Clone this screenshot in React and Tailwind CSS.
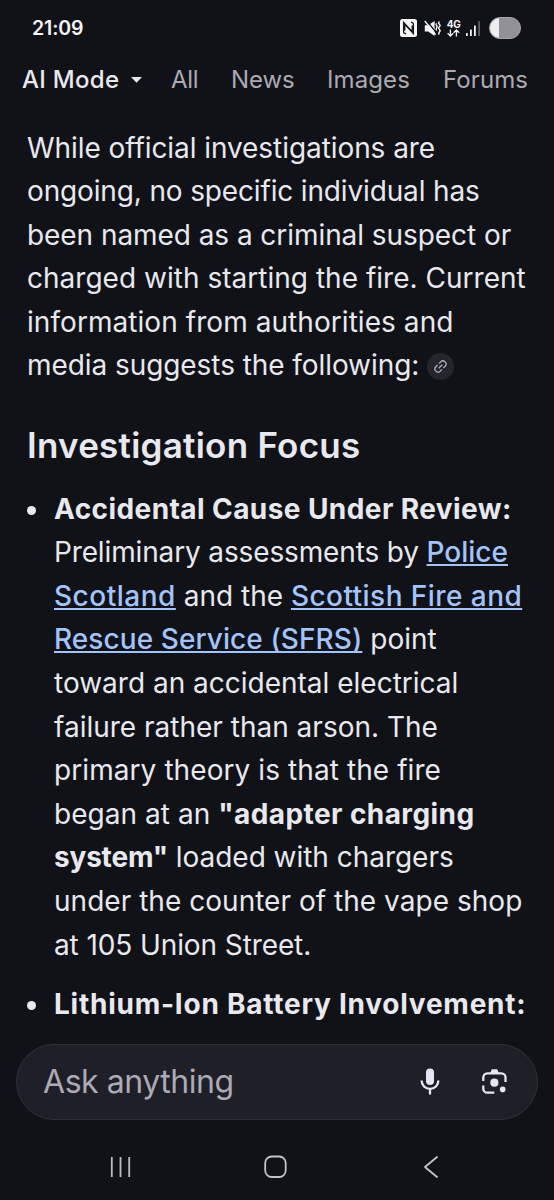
import clsx from "clsx";

const tabs = [
  { label: "All", className: "ml-[29px] w-[28px] tracking-[-0.3px]" },
  { label: "News", className: "ml-[32px] w-[64px] tracking-[-0.1px]" },
  { label: "Images", className: "ml-[32px] w-[84px] tracking-[0.1px]" },
  { label: "Forums", className: "ml-[32px] w-[86px] tracking-[0.1px]" },
];

const Line = ({ className, children }) => (
  <span className={clsx("block whitespace-pre", className)}>{children}</span>
);

const SourceLink = ({ className, children }) => (
  <a
    href="#"
    className={clsx(
      "font-medium text-[#a3c3fb] underline decoration-[1.5px] underline-offset-[2px] [text-decoration-skip-ink:none]",
      className
    )}
  >
    {children}
  </a>
);

const StatusBar = () => (
  <div className="flex h-[56px] items-center justify-between pl-[32px] pr-[33px] text-[#f5f5f7]">
    <span className="mt-[2px] text-[19.5px] font-semibold leading-none tracking-[-0.1px]">21:09</span>
    <div className="flex items-center">
      {/* NFC */}
      <svg width="17" height="18" viewBox="0 0 17 18" className="mr-[7px]">
        <rect width="17" height="18" rx="2.5" fill="#f5f5f7" />
        <path
          d="M6 14.8 4.4 14.2Q3.6 13.9 3.6 13V3.4L12.2 12.6V6.6M11 3.2l1.6.6q.8.3.8 1.2v9.6L4.8 5.4v6"
          fill="none"
          stroke="#17181d"
          strokeWidth="1.3"
        />
      </svg>
      {/* muted, vibrating */}
      <svg width="17" height="17" viewBox="0 0 17 17" className="mr-[5px]" fill="none">
        <path d="M.8 5.3h3.4L10.6 1v15l-6.4-4.5H.8z" fill="#f5f5f7" />
        <path d="M2.2 0 12 12.4" stroke="#111217" strokeWidth="1.4" />
        <path d="M.8 1 11.6 14.6" stroke="#f5f5f7" strokeWidth="1.4" />
        <path
          d="M12.6 3.2q-1.2 1.2 0 2.4t0 2.4 0 2.4M15.4 1.6q-1.4 1.3 0 2.6t0 2.6 0 2.6 0 2.6 0 2.6"
          stroke="#f5f5f7"
          strokeWidth="1.4"
        />
      </svg>
      <div className="mr-[5px] flex w-[15px] flex-col items-center">
        <span className="text-[10px] font-bold leading-[9px] tracking-[-0.4px]">4G</span>
        <svg width="13" height="8" viewBox="0 0 13 8" fill="none" stroke="#f5f5f7" strokeWidth="1.3">
          <path d="M3.4 0.4v6.4M.6 4.2l2.8 2.8 2.8-2.8M9.4 7.6V1.2M6.6 3.8 9.4 1l2.8 2.8" />
        </svg>
      </div>
      <svg width="15" height="15" viewBox="0 0 15 15" className="mr-[8px]" fill="#f5f5f7">
        <rect x="0" y="12" width="1.7" height="3" rx=".6" />
        <rect x="4" y="8.5" width="1.8" height="6.5" rx=".6" />
        <rect x="8" y="4.5" width="1.8" height="10.5" rx=".6" />
        <rect x="12.2" y="0" width="1.8" height="15" rx=".6" fill="#5c5d61" />
      </svg>
      <div className="h-[22px] w-[32px] overflow-hidden rounded-full border border-[#a7a7aa] bg-[#929296]">
        <div className="h-full w-[9px] bg-[#eeeeef]" />
      </div>
    </div>
  </div>
);

const TabBar = () => (
  <nav className="flex h-[46px] items-center whitespace-nowrap pl-[22px] pt-[1px] text-[24px] text-[#abaab3]">
    <span className="w-[98px] font-medium tracking-[0.3px] text-[#e8e8ef]">AI Mode</span>
    <svg width="11" height="6" viewBox="0 0 11 6" className="ml-[11px] mt-px">
      <path d="M0 0h11L5.5 5.8z" fill="#e8e8ef" />
    </svg>
    {tabs.map((tab) => (
      <span key={tab.label} className={tab.className}>
        {tab.label}
      </span>
    ))}
  </nav>
);

const Bullet = () => <span className="mt-[18px] h-[9px] w-[9px] shrink-0 rounded-full bg-[#e8e8ef]" />;

const Answer = () => (
  <main className="h-[942px] overflow-hidden pl-[27px] pt-[24.5px] text-[28px] leading-[43.6px] text-[#e8e8ef]">
    <p>
      <Line className="tracking-[-0.07px]">While official investigations are</Line>
      <Line className="tracking-[-0.15px]">ongoing, no specific individual has</Line>
      <Line className="tracking-[-0.06px]">been named as a criminal suspect or</Line>
      <Line className="tracking-[0.02px]">charged with starting the fire. Current</Line>
      <Line className="tracking-[0.06px]">information from authorities and</Line>
      <span className="flex items-center whitespace-pre">
        <span className="w-[400px] tracking-[-0.07px]">media suggests the following:</span>
        <span className="mt-px flex h-[27px] w-[27px] items-center justify-center rounded-full bg-[#25252d]">
          <svg width="15" height="15" viewBox="0 0 24 24" fill="none" stroke="#b4b3bc" strokeWidth="2">
            <g transform="rotate(-45 12 12)">
              <path d="M10.5 17H6.5a5 5 0 0 1 0-10h4M13.5 7h4a5 5 0 0 1 0 10h-4M8 12h8" />
            </g>
          </svg>
        </span>
      </span>
    </p>

    <h2 className="mt-[34.5px] text-[35px] font-semibold leading-[44px] tracking-[0.25px]">Investigation Focus</h2>

    <ul className="mt-[21px]">
      <li className="flex">
        <Bullet />
        <div className="ml-[18px]">
          <Line className="font-bold tracking-[0.42px]">Accidental Cause Under Review:</Line>
          <Line>
            <span className="tracking-[-0.14px]">Preliminary assessments by </span>
            <SourceLink>Police</SourceLink>
          </Line>
          <Line>
            <SourceLink className="tracking-[0.5px]">Scotland</SourceLink>
            {" and the "}
            <SourceLink className="tracking-[0.45px]">Scottish Fire and</SourceLink>
          </Line>
          <Line>
            <SourceLink className="tracking-[0.08px]">Rescue Service (SFRS)</SourceLink>
            {" point"}
          </Line>
          <Line>toward an accidental electrical</Line>
          <Line>failure rather than arson. The</Line>
          <Line className="tracking-[0.08px]">primary theory is that the fire</Line>
          <Line>
            <span className="tracking-[0.04px]">began at an </span>
            <strong className="font-bold tracking-[0.42px]">"adapter charging</strong>
          </Line>
          <Line>
            <strong className="font-bold tracking-[-0.2px]">system"</strong>
            <span className="tracking-[-0.03px]"> loaded with chargers</span>
          </Line>
          <Line className="tracking-[0.03px]">under the counter of the vape shop</Line>
          <Line className="tracking-[-0.1px]">at 105 Union Street.</Line>
        </div>
      </li>
      <li className="mt-[16px] flex">
        <Bullet />
        <Line className="ml-[18px] font-bold tracking-[0.75px]">Lithium-Ion Battery Involvement:</Line>
      </li>
    </ul>
  </main>
);

const AskBar = () => (
  <div className="mx-[16px] flex h-[76px] items-center rounded-full border border-[#303138] bg-[#1f1f27] pl-[26px] pr-[30px]">
    <span className="flex-1 text-[32px] leading-none tracking-[-0.45px] text-[#abaab5]">Ask anything</span>
    <svg width="20" height="27" viewBox="0 0 20 27" fill="none" className="mb-[2px] mr-[42px]">
      <rect x="6" y="0.5" width="8" height="16.5" rx="4" fill="#e6e5f2" />
      <path d="M1.6 12.5a8.4 8.4 0 0 0 16.8 0M10 21v5.5" stroke="#e6e5f2" strokeWidth="2.3" />
    </svg>
    <svg width="25" height="25" viewBox="0 0 25 25" fill="none" className="mb-[2px]">
      <path
        d="M1.3 12V8.3a4 4 0 0 1 4-4h14.2a4 4 0 0 1 4 4V13M1.3 16.5v3.2a4 4 0 0 0 4 4h7"
        stroke="#e6e5f2"
        strokeWidth="2.3"
      />
      <path d="M8 4.5 9.8.3h5.4L17 4.5z" fill="#e6e5f2" />
      <circle cx="12.4" cy="13.7" r="4.1" fill="#e6e5f2" />
      <circle cx="20.7" cy="20.4" r="2.8" fill="#e6e5f2" />
    </svg>
  </div>
);

const SystemNav = () => (
  <div className="flex h-[94px] items-center pl-[109px]">
    <svg width="22" height="22" viewBox="0 0 22 22" stroke="#bdbdc1" strokeWidth="1.8">
      <path d="M2.8 1v20M11.5 1v20M20.2 1v20" />
    </svg>
    <svg width="24" height="24" viewBox="0 0 24 24" fill="none" stroke="#c4c4c8" strokeWidth="1.8" className="ml-[133px]">
      <rect x="1.2" y="1.5" width="20.5" height="20.5" rx="6.5" />
    </svg>
    <svg
      width="16"
      height="24"
      viewBox="0 0 16 24"
      fill="none"
      stroke="#c4c4c8"
      strokeWidth="1.8"
      strokeLinecap="round"
      strokeLinejoin="round"
      className="ml-[135px]"
    >
      <path d="M14 2 2 12l12 10" />
    </svg>
  </div>
);

export default function App() {
  return (
    <div className="h-[1200px] w-[554px] overflow-hidden bg-[#111217] font-['Inter','Roboto',sans-serif]">
      <StatusBar />
      <TabBar />
      <Answer />
      <AskBar />
      <SystemNav />
    </div>
  );
}
